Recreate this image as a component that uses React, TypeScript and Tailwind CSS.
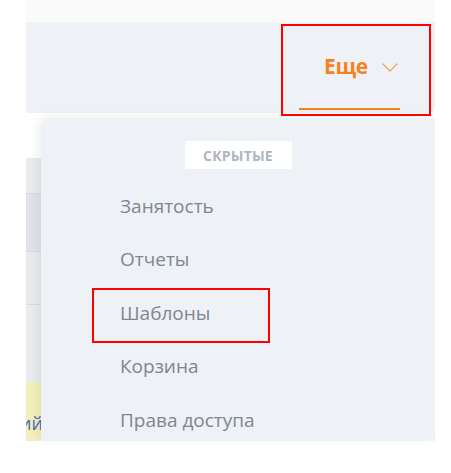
const items = ['Занятость', 'Отчеты', 'Шаблоны', 'Корзина', 'Права доступа'];

export default function App() {
  return (
    <div className="w-[451px] h-[473px] bg-white font-['Open_Sans',sans-serif]">
      <div className="relative ml-[26px] w-[409px]">
        {/* top strip */}
        <div className="h-[22px] bg-[#fafafa]" />

        {/* header bar */}
        <div className="h-[91px] bg-[#eef1f5] rounded-br-[6px] flex justify-end pr-[35px]">
          <div className="w-[101px] h-[88px] flex items-center gap-[14px] pl-[25px] pt-[2px] border-b-2 border-[#f5821f]">
            <span className="text-[21px] font-bold text-[#f5821f] leading-none tracking-[-0.3px]">Еще</span>
            <svg width="16" height="9" viewBox="0 0 16 9" fill="none" className="mt-[2px]">
              <path d="M1 1l7 7 7-7" stroke="#f6a25a" strokeWidth="1.3" strokeLinecap="round" strokeLinejoin="round" />
            </svg>
          </div>
        </div>

        {/* red annotation around tab */}
        <div className="absolute left-[255px] top-[24px] w-[150px] h-[92px] border-2 border-[#ff0000]" />

        <div className="flex">
          {/* left strip: the page under the menu */}
          <div className="w-[15px] flex flex-col">
            <div className="h-[45px] bg-white" />
            <div className="h-[36px] bg-[#e9ebee] border-b border-[#d6d9dd]" />
            <div className="h-[58px] bg-[#dfe2e6] border-b border-[#d6d9dd]" />
            <div className="h-[53px] bg-[#e8eaed] border-b border-[#d6d9dd]" />
            <div className="h-[77px] bg-[#e9ebee]" />
            <div className="h-[59px] bg-[#f3efbb] overflow-hidden flex items-center">
              <span className="text-[18px] text-[#4a6db5] leading-none -ml-[6px] pt-[22px]">ий</span>
            </div>
          </div>

          {/* dropdown */}
          <div className="mt-[5px] w-[394px] h-[323px] bg-[#eef1f5] rounded-tl-[12px] shadow-[-4px_-2px_10px_rgba(0,0,0,0.06)] overflow-hidden">
            <div className="flex justify-center pt-[23px]">
              <span className="h-[28px] w-[107px] bg-white flex items-center justify-center text-[14px] font-bold text-[#b0b5bf] tracking-[0.2px]">
                СКРЫТЫЕ
              </span>
            </div>
            <div className="pt-[10px]">
              {items.map((item) => (
                <div key={item} className="relative h-[53.5px] flex items-center pl-[79px] text-[19px] text-[#80868f]">
                  {item}
                  {item === 'Шаблоны' && (
                    <div className="absolute left-[51px] top-[2px] w-[178px] h-[55px] border-2 border-[#ff0000]" />
                  )}
                </div>
              ))}
            </div>
          </div>
        </div>
      </div>
    </div>
  );
}
